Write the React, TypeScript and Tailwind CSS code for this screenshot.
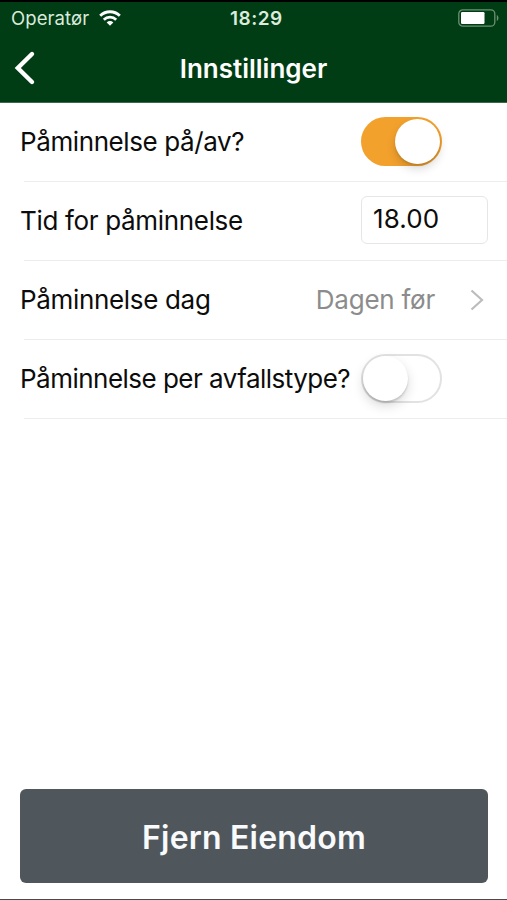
import type { ReactNode } from 'react';
import clsx from 'clsx';

const StatusBar = () => (
  <div className="relative flex h-8 items-center justify-between pl-[11px] pr-2 text-[#dcebdc]">
    <div className="flex items-center gap-[10px]">
      <span className="pt-px text-[18.5px] leading-none tracking-[0.1px]">Operatør</span>
      <svg width="22" height="16" viewBox="0 0 22 16" fill="none" stroke="white" strokeWidth="2.8">
        <path d="M1.2 5.8a13.9 13.9 0 0 1 19.6 0" />
        <path d="M4.8 9.7a8.8 8.8 0 0 1 12.4 0" />
        <path d="M11 15.7 7.7 12.4a4.7 4.7 0 0 1 6.6 0Z" fill="white" stroke="none" />
      </svg>
    </div>
    <svg className="mb-px" width="41" height="18" viewBox="0 0 41 18" fill="none">
      <rect x="0.8" y="0.8" width="36" height="16.4" rx="4" stroke="#6b9170" strokeWidth="1.3" />
      <rect x="3" y="3" width="23.5" height="12" rx="1.2" fill="white" />
      <path d="M38.8 6v6c2.2-1 2.2-5 0-6Z" fill="#6b9170" />
    </svg>
    <span className="absolute left-[230px] pt-px text-[19px] font-semibold leading-none tracking-[0.5px]">18:29</span>
  </div>
);

const Header = () => (
  <header className="h-[103px] border-b border-t-2 border-b-[#3d6a46] border-t-black bg-[#003d14]">
    <StatusBar />
    <div className="grid h-[68px] grid-cols-[1fr_auto_1fr] items-center text-white">
      <button className="ml-[14px] justify-self-start" aria-label="Tilbake">
        <svg width="22" height="36" viewBox="0 0 22 36" fill="none" stroke="white" strokeWidth="4.4" strokeLinecap="round" strokeLinejoin="miter">
          <path d="M18 4 3.8 18 18 32" />
        </svg>
      </button>
      <h1 className="text-[26px] font-semibold">Innstillinger</h1>
    </div>
  </header>
);

const Toggle = ({ on }: { on: boolean }) => (
  <button
    role="switch"
    aria-checked={on}
    className={clsx(
      'flex h-[49px] w-[81px] shrink-0 items-center rounded-full',
      on ? 'justify-end bg-[#f2a12d] pr-[2px]' : 'border-2 border-[#e2e2e2] bg-white'
    )}
  >
    <span
      className={clsx(
        'size-[45px] rounded-full bg-white',
        on ? 'shadow-[0_5px_10px_rgba(0,0,0,0.15),0_2px_2px_rgba(0,0,0,0.1)]' : 'shadow-[0_5px_12px_rgba(0,0,0,0.15),0_2px_2px_rgba(0,0,0,0.15)]'
      )}
    />
  </button>
);

const Row = ({ label, labelClass, children }: { label: string; labelClass: string; children: ReactNode }) => (
  <div className="flex h-[79px] items-center pb-[2px] pl-5">
    <span className={clsx('whitespace-nowrap text-[26px] leading-none text-[#0c0c0c]', labelClass)}>{label}</span>
    {children}
  </div>
);

const Divider = () => <div className="-mt-px ml-6 h-px bg-[#ededed]" />;

const App = () => {
  return (
    <div className="flex h-[900px] w-[507px] flex-col overflow-hidden border-b border-[#4a4a4a] bg-white font-['Inter',sans-serif]">
      <Header />

      <main className="flex-1">
        <Row label="Påminnelse på/av?" labelClass="tracking-[-0.4px]">
          <div className="ml-auto mr-[65px] flex">
            <Toggle on />
          </div>
        </Row>
        <Divider />
        <Row label="Tid for påminnelse" labelClass="tracking-[-0.33px]">
          <div className="mb-[2px] ml-auto mr-[19px] flex h-12 w-[127px] items-center rounded-md border border-[#e6e6e6] pb-px pl-[11px] text-[26px] leading-none tracking-[0.1px] text-[#0c0c0c]">
            18.00
          </div>
        </Row>
        <Divider />
        <Row label="Påminnelse dag" labelClass="tracking-[-0.33px]">
          <span className="ml-auto text-[26px] leading-none tracking-[-0.25px] text-[#8c8c8c]">Dagen før</span>
          <svg className="ml-[35px] mr-[22px]" width="15" height="22" viewBox="0 0 15 22" fill="none" stroke="#bcbcbc" strokeWidth="2.2">
            <path d="m1.5 1.5 10.5 9.5-10.5 9.5" />
          </svg>
        </Row>
        <Divider />
        <Row label="Påminnelse per avfallstype?" labelClass="tracking-[-0.52px]">
          <div className="ml-auto mr-[65px] flex">
            <Toggle on={false} />
          </div>
        </Row>
        <Divider />
      </main>

      <button className="mb-4 ml-5 mr-[19px] h-[94px] shrink-0 rounded-md bg-[#50575c] pt-[3px] text-[32px] font-semibold tracking-[0.2px] text-[#f8fafc]">
        Fjern Eiendom
      </button>
    </div>
  );
};

export default App;
